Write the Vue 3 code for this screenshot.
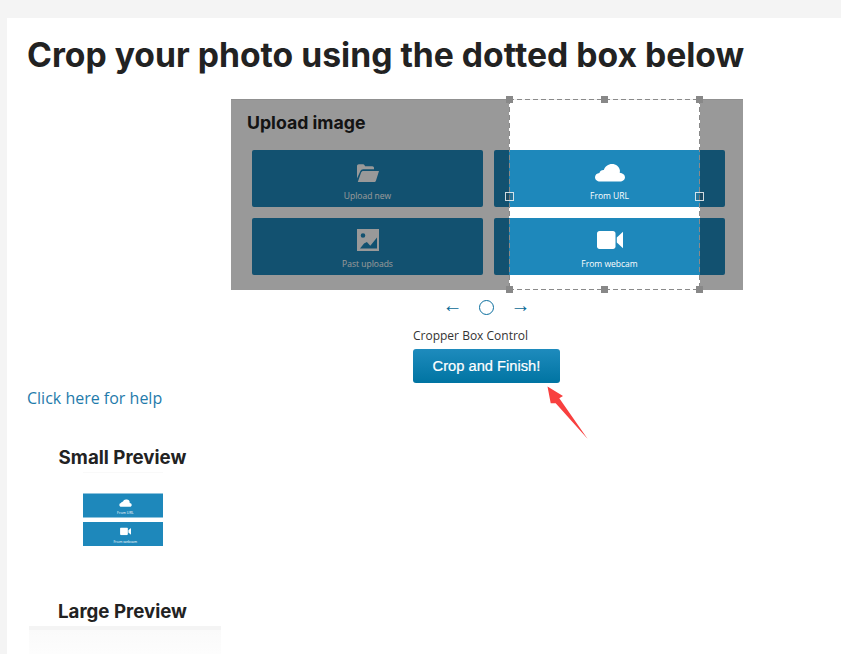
<template>
  <div class="page">
    <svg class="sprites" width="0" height="0">
      <symbol id="ico-folder" viewBox="0 0 22 18">
        <path d="M0 2.200C0 1 .8.3 1.800.3h4c1 0 1.600.6 2 1.400l.3.6h7.200c1 0 1.700.7 1.700 1.700v1.300H6.200c-1.400 0-2.400.7-2.900 2L0 14.600z" />
        <path d="M6.400 6.900H22l-3 9.600c-.3 1-1 1.500-2 1.500H.8l3.300-9.400c.4-1.100 1.200-1.700 2.300-1.700z" />
      </symbol>
      <symbol id="ico-cloud" viewBox="0 0 30 18">
        <path d="M5 17.500C2.200 17.500 0 15.600 0 13.200c0-2.300 1.900-4.100 4.400-4.300.5-1.900 2.300-3.200 4.400-3C10 2.500 13.200 0 17 0c4 0 7.300 2.700 7.900 6.300.1 1 0 1.700-.2 2.400 2.900.2 5.300 2.100 5.300 4.500 0 2.400-2.300 4.300-5 4.300z" />
      </symbol>
      <symbol id="ico-video" viewBox="0 0 26 18">
        <path d="M2.500 0h13.500c1.400 0 2.500 1.100 2.500 2.500v13c0 1.400-1.100 2.500-2.500 2.500H2.500C1.100 18 0 16.900 0 15.500v-13C0 1.100 1.100 0 2.500 0z" />
        <path d="M19.800 6.500 26 .8v16.400l-6.200-5.700z" />
      </symbol>
      <symbol id="ico-image" viewBox="0 0 22 22">
        <path fill-rule="evenodd" d="M0 0h22v22H0zM6 4.200a2.300 2.300 0 1 0 0 4.600 2.300 2.300 0 0 0 0-4.600zM3 19.500h17V8.500l-6.700 8.200-3.400-3.700L7 14.500z" />
      </symbol>
    </svg>

    <main class="card">
      <h1 class="title">Crop your photo using the dotted box below</h1>

      <div class="stage">
        <!-- dimmed copy under the crop box -->
        <div class="panel panel-dim">
          <h2 class="panel-title">Upload image</h2>
          <div class="tiles">
            <div class="tile" v-for="t in tiles" :key="t.label">
              <svg class="tile-icon" :style="iconStyle(t)"><use :href="'#' + t.icon" /></svg>
              <span class="tile-label">{{ t.label }}</span>
            </div>
          </div>
        </div>

        <div class="crop-view crop-window">
          <div class="crop-tiles">
            <div class="tile" v-for="t in rightTiles" :key="t.label">
              <svg class="tile-icon" :style="iconStyle(t)"><use :href="'#' + t.icon" /></svg>
              <span class="tile-label">{{ t.label }}</span>
            </div>
          </div>
        </div>

        <div class="crop-box">
          <i v-for="h in handles" :key="h" class="handle" :class="h"></i>
        </div>
      </div>

      <div class="arrows">
        <span class="arrow">←</span>
        <span class="dot"></span>
        <span class="arrow">→</span>
      </div>

      <div class="actions">
        <div class="control-label">Cropper Box Control</div>
        <button class="finish">Crop and Finish!</button>
      </div>

      <a class="help">Click here for help</a>

      <section class="previews">
        <h3 class="preview-title">Small Preview</h3>
        <div class="preview-small">
          <div class="crop-view mini">
            <div class="crop-tiles">
              <div class="tile" v-for="t in rightTiles" :key="t.label">
                <svg class="tile-icon" :style="iconStyle(t)"><use :href="'#' + t.icon" /></svg>
                <span class="tile-label">{{ t.label }}</span>
              </div>
            </div>
          </div>
        </div>
        <h3 class="preview-title large-title">Large Preview</h3>
        <div class="preview-large"></div>
      </section>

      <svg class="pointer" width="50" height="60" viewBox="0 0 50 60">
        <path d="M2.500 1.500 18 11 14.300 13.300 42.700 54 10.700 18.300 5.700 18.300z" fill="#f8403f" />
      </svg>
    </main>
  </div>
</template>

<script setup>
const tiles = [
  { label: 'Upload new', icon: 'ico-folder', w: 22, h: 18, top: 14 },
  { label: 'From URL', icon: 'ico-cloud', w: 30, h: 18, top: 14 },
  { label: 'Past uploads', icon: 'ico-image', w: 22, h: 22, top: 11 },
  { label: 'From webcam', icon: 'ico-video', w: 26, h: 18, top: 13 }
]
const rightTiles = tiles.filter((t) => t.label.startsWith('From'))

const handles = ['nw', 'n', 'ne', 'w', 'e', 'sw', 's', 'se']

const iconStyle = (t) => ({
  width: t.w + 'px',
  height: t.h + 'px',
  marginTop: t.top + 'px'
})
</script>

<style>
html,
body {
  margin: 0;
  background: #f4f4f4;
}
</style>

<style scoped>
.page {
  height: 654px;
  overflow: hidden;
  padding: 18px 0 0 7px;
  box-sizing: border-box;
  background: #f4f4f4;
}

.sprites {
  position: absolute;
}

.card {
  position: relative;
  height: 636px;
  padding: 0 0 0 20px;
  background: #fff;
  font-family: "Open Sans", sans-serif;
}

.title {
  margin: 0;
  padding-top: 17px;
  height: 63px;
  box-sizing: border-box;
  font-family: Inter, sans-serif;
  font-size: 33.700px;
  line-height: 40px;
  font-weight: 700;
  color: #222;
  white-space: nowrap;
}

/* cropper */
.stage {
  position: relative;
  width: 512px;
  height: 191px;
  margin: 18px 0 0 204px;
}

.panel {
  position: relative;
  width: 512px;
  height: 191px;
  box-sizing: border-box;
  padding: 12px 18px 0 21px;
  background: #fff;
  border-top: 1px solid #f0f0f0;
}

.panel-dim::after {
  content: "";
  position: absolute;
  inset: -1px 0 0;
  background: rgba(0, 0, 0, 0.4);
}

.panel-title {
  margin: 0 0 0 -5px;
  font-family: Inter, sans-serif;
  font-size: 17.700px;
  line-height: 22px;
  font-weight: 700;
  color: #222;
}

.tiles {
  display: grid;
  grid-template-columns: 231px 231px;
  grid-auto-rows: 57px;
  gap: 11px;
  margin-top: 16px;
}

.crop-tiles {
  display: grid;
  grid-template-columns: 231px;
  grid-auto-rows: 57px;
  gap: 11px;
  margin: 50px 0 0 -15px;
}

.tile {
  display: flex;
  flex-direction: column;
  align-items: center;
  border-radius: 2px;
  background: #1e88bb;
  color: #fff;
}

.tile-icon {
  flex: none;
  fill: #fff;
}

.tile-label {
  position: absolute;
  margin-top: 40px;
  font-size: 8.500px;
  line-height: 12px;
}

.crop-view {
  width: 191px;
  height: 191px;
  overflow: hidden;
  background: #fff;
  border-top: 1px solid #f0f0f0;
  box-sizing: border-box;
}

.crop-window {
  position: absolute;
  top: 0;
  left: 278px;
}

/* dashes drawn by hand: a dashed border comes out too short */
.crop-box {
  position: absolute;
  top: 0;
  left: 278px;
  width: 191px;
  height: 191px;
  --dash-h: repeating-linear-gradient(90deg, #8a8a8a 0 5px, transparent 5px 8px);
  --dash-v: repeating-linear-gradient(180deg, #8a8a8a 0 5px, transparent 5px 8px);
  background:
    var(--dash-h) top / 100% 1px no-repeat,
    var(--dash-h) bottom / 100% 1px no-repeat,
    var(--dash-v) left / 1px 100% no-repeat,
    var(--dash-v) right / 1px 100% no-repeat;
}

.handle {
  position: absolute;
  width: 7px;
  height: 7px;
  background: #888;
}

.handle.nw { top: -3px; left: -3px; }
.handle.n { top: -3px; left: 92px; }
.handle.ne { top: -3px; right: -3px; }
.handle.sw { bottom: -3px; left: -3px; }
.handle.s { bottom: -3px; left: 92px; }
.handle.se { bottom: -3px; right: -3px; }

.handle.w,
.handle.e {
  top: 93px;
  box-sizing: border-box;
  width: 9px;
  height: 9px;
  background: rgba(60, 60, 60, 0.25);
  border: 1px solid rgba(255, 255, 255, 0.8);
}

.handle.w { left: -4px; }
.handle.e { right: -4px; }

/* below the cropper */
.arrows {
  display: flex;
  align-items: center;
  gap: 19px;
  height: 17px;
  margin: 9px 0 0 418px;
  color: #0a6a96;
}

.arrow {
  width: 15px;
  display: flex;
  justify-content: center;
  font-family: "Liberation Sans", sans-serif;
  font-size: 20px;
  line-height: 13px;
  height: 17px;
}

.dot {
  width: 13px;
  height: 13px;
  border: 1px solid #0a6e9e;
  border-radius: 50%;
}

.actions {
  margin: 12px 0 0 386px;
}

.control-label {
  font-size: 12px;
  line-height: 16px;
  color: #333;
}

.finish {
  display: block;
  width: 147px;
  height: 34px;
  margin-top: 5px;
  padding: 0;
  border: none;
  border-radius: 3px;
  background: linear-gradient(#1e8bbd, #0074a2);
  font-family: "Liberation Sans", sans-serif;
  font-size: 14.700px;
  font-weight: 400;
  color: #fff;
  -webkit-text-stroke: 0.2px #fff;
}

.help {
  display: block;
  margin-top: 5px;
  font-size: 16px;
  line-height: 20px;
  color: #1f7bab;
}

.previews {
  width: 192px;
  margin: 0 0 0 2px;
}

.preview-title {
  margin: 0;
  padding-right: 5px;
  text-align: center;
  font-family: Inter, sans-serif;
  font-size: 18.700px;
  line-height: 24px;
  font-weight: 700;
  color: #222;
}

.previews > .preview-title:first-child {
  margin-top: 38px;
}

.preview-small {
  width: 80px;
  height: 80px;
  margin: 2px 0 0 54px;
  overflow: hidden;
}

.mini {
  transform: scale(0.421);
  transform-origin: 0 0;
}

.large-title {
  margin-top: 48px !important;
}

.preview-large {
  height: 40px;
  margin-top: 2px;
  border-top: 4px solid #f4f4f4;
  background: linear-gradient(#fafafa, #fff);
}

.pointer {
  position: absolute;
  top: 367px;
  left: 538px;
}
</style>
